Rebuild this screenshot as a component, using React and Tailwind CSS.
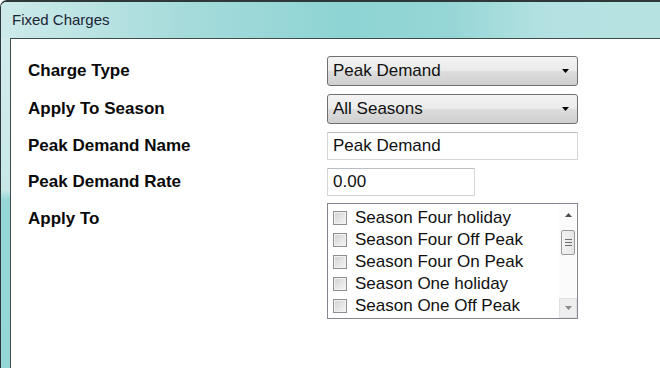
import React from 'react';

const items = [
  'Season Four holiday',
  'Season Four Off Peak',
  'Season Four On Peak',
  'Season One holiday',
  'Season One Off Peak',
];

const Arrow = ({ up, color = '#000' }) => (
  <svg width="7" height="4" viewBox="0 0 7 4">
    <path d={up ? 'M0 4 L3.5 0 L7 4 Z' : 'M0 0 L7 0 L3.5 4 Z'} fill={color} />
  </svg>
);

const Select = ({ value }) => (
  <div className="w-[251px] h-[30px] flex items-center justify-between pl-[5px] pr-[8px] rounded-[3px] border border-[#707070] bg-[linear-gradient(180deg,#f3f3f3_0%,#ebebeb_48%,#dddddd_52%,#cfcfcf_100%)] text-[17px] text-[#111]">
    <span>{value}</span>
    <Arrow />
  </div>
);

const Label = ({ children, top }) => (
  <div className={`w-[299px] text-[17px] leading-[20px] font-bold text-[#0a0a0a] ${top ? 'pt-[6px]' : ''}`}>{children}</div>
);

const App = () => {
  return (
    <div className="w-[660px] h-[368px] overflow-hidden bg-white font-['Liberation_Sans',Arial,sans-serif]">
      <div className="flex flex-col h-full border-l border-t-2 border-[#2e3838] rounded-tl-[7px] overflow-hidden">
        {/* title bar */}
        <div className="h-[36px] shrink-0 flex items-center pl-[11px] text-[15px] text-[#1b2434] bg-[linear-gradient(90deg,#cdeaea_0%,#a6dbdb_28%,#8ed4d4_52%,#96d6d6_68%,#b3e1e1_82%,#b7e2e2_100%)]">
          Fixed Charges
        </div>

        <div className="flex flex-1">
          <div className="w-[9px] shrink-0 bg-[linear-gradient(180deg,#d2ecec_0%,#c8e8e8_46%,#97d7d7_49%,#95d6d6_100%)]" />
          <div className="flex-1 border-l border-t border-[#3f4c4c] bg-white pt-[17px] pl-[17px]">
            <div className="flex items-center h-[30px]">
              <Label>Charge Type</Label>
              <Select value="Peak Demand" />
            </div>
            <div className="flex items-center h-[30px] mt-[8px]">
              <Label>Apply To Season</Label>
              <Select value="All Seasons" />
            </div>
            <div className="flex items-center h-[28px] mt-[8px]">
              <Label>Peak Demand Name</Label>
              <div className="w-[251px] h-[28px] flex items-center pl-[5px] border border-[#d3d6da] border-t-[#b9bcc0] text-[17px] text-[#111]">
                Peak Demand
              </div>
            </div>
            <div className="flex items-center h-[28px] mt-[8px]">
              <Label>Peak Demand Rate</Label>
              <div className="w-[148px] h-[28px] flex items-center pl-[5px] border border-[#d3d6da] border-t-[#b9bcc0] text-[17px] text-[#111]">
                0.00
              </div>
            </div>
            <div className="flex items-start mt-[7px]">
              <Label top>Apply To</Label>
              <div className="w-[251px] h-[116px] flex border border-[#828790] bg-white overflow-hidden">
                <div className="flex-1 pt-[3px] pl-[5px]">
                  {items.map((it) => (
                    <div key={it} className="h-[22px] flex items-center gap-[8px] text-[17px] text-[#111]">
                      <div className="w-[14px] h-[14px] shrink-0 border border-[#8e8f8f] bg-[linear-gradient(135deg,#cfcfcf_0%,#e6e6e6_55%,#f4f4f4_100%)] shadow-[inset_0_0_0_1px_#f2f2f2]" />
                      <span>{it}</span>
                    </div>
                  ))}
                </div>
                <div className="w-[18px] shrink-0 flex flex-col items-center bg-[#fbfbfb]">
                  <div className="h-[22px] w-full flex items-center justify-center">
                    <Arrow up color="#4d4d4d" />
                  </div>
                  <div className="mt-[4px] w-[14px] h-[25px] rounded-[2px] border border-[#9a9a9a] bg-[linear-gradient(90deg,#f3f3f3,#e6e6e6)] flex flex-col items-center justify-center gap-[2px]">
                    <div className="w-[7px] h-[1px] bg-[#6f6f6f]" />
                    <div className="w-[7px] h-[1px] bg-[#6f6f6f]" />
                    <div className="w-[7px] h-[1px] bg-[#6f6f6f]" />
                  </div>
                  <div className="flex-1" />
                  <div className="h-[20px] w-full flex items-center justify-center bg-[#eeeeee] border border-[#e0e0e0]">
                    <Arrow color="#8a8a8a" />
                  </div>
                </div>
              </div>
            </div>
          </div>
        </div>
      </div>
    </div>
  );
};

export default App;
